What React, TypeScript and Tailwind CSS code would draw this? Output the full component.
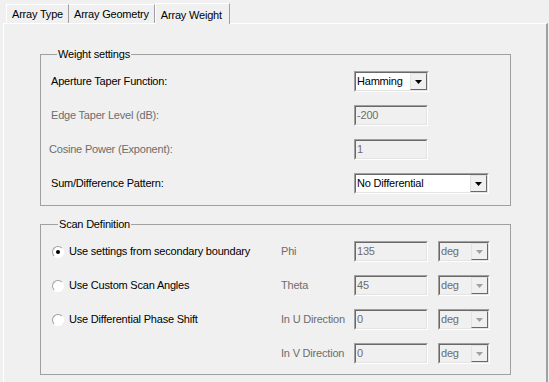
import React from 'react';

const font = { fontFamily: '"Liberation Sans", Arial, sans-serif' };

function Arrow({ disabled }: { disabled?: boolean }) {
  return (
    <svg width="7" height="4" viewBox="0 0 7 4">
      <polygon points="0,0 7,0 3.5,4" fill={disabled ? '#a0a0a0' : '#000'} />
    </svg>
  );
}

// sunken 3d frame like classic win32 edit/combo
function Sunken({ w, white, top, children }: { w: string; white?: boolean; top?: boolean; children: React.ReactNode }) {
  return (
    <div className={`${w} h-[21px] border border-t-[#a0a0a0] border-l-[#a0a0a0] border-b-white border-r-white`}>
      <div
        className={`h-full w-full border border-t-[#696969] border-l-[#696969] border-b-[#e3e3e3] border-r-[#e3e3e3] flex ${
          top ? 'items-start pt-[2px]' : 'items-center'
        } ${white ? 'bg-white' : 'bg-[#f0f0f0]'}`}
      >
        {children}
      </div>
    </div>
  );
}

function TextBox({ value }: { value: string }) {
  return (
    <Sunken w="w-[74px]" top>
      <span className="pl-[1px] text-[#6d6d6d] leading-[12px]">{value}</span>
    </Sunken>
  );
}

function Combo({ value, w, disabled }: { value: string; w: string; disabled?: boolean }) {
  return (
    <Sunken w={w} white={!disabled}>
      <span className={`flex-1 pl-[1px] leading-none ${disabled ? 'text-[#6d6d6d]' : 'text-black'}`}>{value}</span>
      <div className="w-[17px] h-[17px] bg-[#f0f0f0] border border-t-[#e3e3e3] border-l-[#e3e3e3] border-b-[#696969] border-r-[#696969] flex items-center justify-center">
        <Arrow disabled={disabled} />
      </div>
    </Sunken>
  );
}

function Radio({ checked, label }: { checked?: boolean; label: string }) {
  return (
    <div className="flex items-center">
      <div className="w-[12px] h-[12px] rounded-full border border-t-[#a0a0a0] border-l-[#a0a0a0] border-b-white border-r-white bg-white flex items-center justify-center">
        {checked ? <div className="w-[4px] h-[4px] rounded-full bg-black" /> : null}
      </div>
      <span className="ml-[5px]">{label}</span>
    </div>
  );
}

export default function App() {
  const scanRows = [
    { radio: 'Use settings from secondary boundary', checked: true, label: 'Phi', value: '135' },
    { radio: 'Use Custom Scan Angles', label: 'Theta', value: '45' },
    { radio: 'Use Differential Phase Shift', label: 'In U Direction', value: '0' },
    { radio: '', label: 'In V Direction', value: '0' },
  ];

  return (
    <div className="w-[549px] h-[382px] bg-[#f0f0f0] text-[11px] tracking-[-0.2px] text-black overflow-hidden" style={font}>
      {/* tabs */}
      <div className="h-[23px] flex items-end pl-[6px]">
        <div className="h-[19px] px-[5px] flex items-center border-l border-t border-white border-r border-r-[#a0a0a0]">Array Type</div>
        <div className="h-[19px] px-[5px] flex items-center border-t border-white border-r border-r-[#a0a0a0]">Array Geometry</div>
        <div className="h-[21px] w-[75px] pl-[5px] flex items-start pt-[3px] border-l border-t border-white border-r border-r-[#a0a0a0] bg-[#f0f0f0] -mb-[1px] relative">
          Array Weight
        </div>
      </div>

      {/* panel */}
      <div className="ml-[3px] w-[545px] h-[359px] border-t border-l border-white border-r-2 border-r-[#a0a0a0] pl-[36px]">
        <fieldset className="mt-[24px] w-[471px] border border-[#a0a0a0] pl-[10px] pr-[8px] pt-[10px] pb-[11px]">
          <legend className="ml-[6px] px-[1px] leading-[13px]">Weight settings</legend>
          <div className="flex flex-col gap-[13px]">
            <div className="h-[21px] flex items-center">
              <span className="w-[303px]">Aperture Taper Function:</span>
              <Combo value="Hamming" w="w-[75px]" />
            </div>
            <div className="h-[21px] flex items-center">
              <span className="w-[303px] text-[#6d6d6d]">Edge Taper Level (dB):</span>
              <TextBox value="-200" />
            </div>
            <div className="h-[21px] flex items-center">
              <span className="w-[303px] -ml-[2px] mr-[2px] text-[#6d6d6d]">Cosine Power (Exponent):</span>
              <TextBox value="1" />
            </div>
            <div className="h-[21px] flex items-center">
              <span className="w-[303px]">Sum/Difference Pattern:</span>
              <Combo value="No Differential" w="w-[135px]" />
            </div>
          </div>
        </fieldset>

        <fieldset className="mt-[12px] w-[471px] border border-[#a0a0a0] pl-[11px] pr-[8px] pt-[10px] pb-[10px]">
          <legend className="ml-[6px] px-[1px] leading-[13px]">Scan Definition</legend>
          <div className="flex flex-col gap-[13px]">
            {scanRows.map((r) => (
              <div key={r.label} className="h-[21px] flex items-center">
                <div className="w-[229px]">{r.radio ? <Radio checked={r.checked} label={r.radio} /> : null}</div>
                <span className="w-[73px] text-[#6d6d6d]">{r.label}</span>
                <TextBox value={r.value} />
                <div className="ml-[10px]">
                  <Combo value="deg" w="w-[52px]" disabled />
                </div>
              </div>
            ))}
          </div>
        </fieldset>
      </div>
    </div>
  );
}
